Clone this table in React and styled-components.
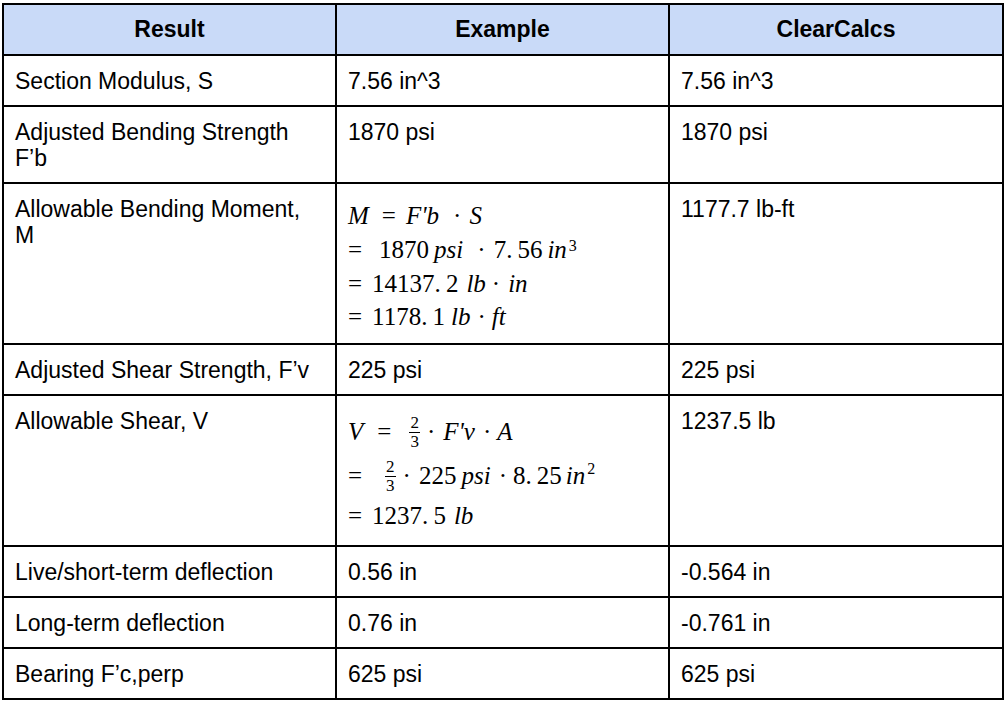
import React from "react"
import styled, { createGlobalStyle } from "styled-components"

const GlobalStyle = createGlobalStyle`
  html, body {
    margin: 0;
    padding: 0;
    background: #ffffff;
  }
  body {
    font-family: "Liberation Sans", Arial, sans-serif;
    color: #000000;
  }
`

// Outer table, Google Docs style with thick black rules
const Table = styled.table`
  margin: 3px 0 0 2px;
  width: 1000px;
  border-collapse: collapse;
  table-layout: fixed;
  font-size: 23px;
  line-height: 26px;
`

const Col = styled.col`
  width: ${({ $w }) => $w}px;
`

const HeadCell = styled.th`
  background: #c9daf8;
  border: 2px solid #000;
  padding: 11px 11px 12px;
  font-weight: 700;
  text-align: center;
`

const Cell = styled.td`
  border: 2px solid #000;
  padding: 12px 11px 11px;
  vertical-align: top;
  text-align: left;
  font-weight: 400;
`

// Equation block, set in a serif to stand in for Cambria Math
const Equation = styled.div`
  font-family: "Liberation Serif", "DejaVu Serif", serif;
  font-size: 25px;
  margin-top: ${({ $mt }) => $mt || 0}px;
`

const EqLine = styled.div`
  display: flex;
  align-items: center;
  height: ${({ $h }) => $h}px;
  white-space: pre;
`

const Tok = styled.span`
  font-style: ${({ $i }) => ($i ? "italic" : "normal")};
  margin-left: ${({ $ml }) => $ml || 0}px;
`

const Sup = styled.span`
  font-style: normal;
  font-size: 16px;
  line-height: 16px;
  align-self: flex-start;
  margin-top: ${({ $top }) => $top || 0}px;
  margin-left: ${({ $ml }) => $ml || 2}px;
`

const Frac = styled.span`
  display: inline-flex;
  flex-direction: column;
  align-items: center;
  font-size: 17px;
  line-height: 18px;
  margin-left: ${({ $ml }) => $ml || 0}px;

  span + span {
    border-top: 1px solid #000;
    padding: 0 1px;
  }
`

const Half = ({ ml }) => (
  <Frac $ml={ml}>
    <span>2</span>
    <span>3</span>
  </Frac>
)

const MomentEq = () => (
  <Equation $mt={3}>
    <EqLine $h={34}>
      <Tok $i>M</Tok>
      <Tok $ml={13}>=</Tok>
      <Tok $i $ml={10}>F'b</Tok>
      <Tok $ml={14}>·</Tok>
      <Tok $i $ml={8}>S</Tok>
    </EqLine>
    <EqLine $h={34}>
      <Tok>=</Tok>
      <Tok $ml={17}>1870</Tok>
      <Tok $i $ml={5}>psi</Tok>
      <Tok $ml={14}>·</Tok>
      <Tok $ml={8}>7.{"\u2009"}56</Tok>
      <Tok $i $ml={5}>in</Tok>
      <Sup $top={5}>3</Sup>
    </EqLine>
    <EqLine $h={34}>
      <Tok>=</Tok>
      <Tok $ml={10}>14137.{"\u2009"}2</Tok>
      <Tok $i $ml={8}>lb</Tok>
      <Tok $ml={6}>·</Tok>
      <Tok $i $ml={8}>in</Tok>
    </EqLine>
    <EqLine $h={31}>
      <Tok>=</Tok>
      <Tok $ml={10}>1178.{"\u2009"}1</Tok>
      <Tok $i $ml={6}>lb</Tok>
      <Tok $ml={7}>·</Tok>
      <Tok $i $ml={6}>ft</Tok>
    </EqLine>
  </Equation>
)

const ShearEq = () => (
  <Equation $mt={1}>
    <EqLine $h={46}>
      <Tok $i>V</Tok>
      <Tok $ml={14}>=</Tok>
      <Half ml={18} />
      <Tok $ml={7}>·</Tok>
      <Tok $i $ml={8}>F'v</Tok>
      <Tok $ml={8}>·</Tok>
      <Tok $i $ml={6}>A</Tok>
    </EqLine>
    <EqLine $h={42}>
      <Tok>=</Tok>
      <Half ml={23} />
      <Tok $ml={7}>·</Tok>
      <Tok $ml={8}>225</Tok>
      <Tok $i $ml={5}>psi</Tok>
      <Tok $ml={8}>·</Tok>
      <Tok $ml={6}>8.{"\u2009"}25</Tok>
      <Tok $i $ml={4}>in</Tok>
      <Sup $top={6}>2</Sup>
    </EqLine>
    <EqLine $h={37}>
      <Tok>=</Tok>
      <Tok $ml={10}>1237.{"\u2009"}5</Tok>
      <Tok $i $ml={8}>lb</Tok>
    </EqLine>
  </Equation>
)

const rows = [
  { label: "Section Modulus, S", example: "7.56 in^3", calc: "7.56 in^3" },
  { label: "Adjusted Bending Strength F’b", example: "1870 psi", calc: "1870 psi" },
  { label: "Allowable Bending Moment, M", example: <MomentEq />, calc: "1177.7 lb-ft" },
  { label: "Adjusted Shear Strength, F’v", example: "225 psi", calc: "225 psi" },
  { label: "Allowable Shear, V", example: <ShearEq />, calc: "1237.5 lb" },
  { label: "Live/short-term deflection", example: "0.56 in", calc: "-0.564 in" },
  { label: "Long-term deflection", example: "0.76 in", calc: "-0.761 in" },
  { label: "Bearing F’c,perp", example: "625 psi", calc: "625 psi" },
]

const App = () => (
  <>
    <GlobalStyle />
    <Table>
      <colgroup>
        <Col $w={333} />
        <Col $w={333} />
        <Col $w={334} />
      </colgroup>
      <thead>
        <tr>
          <HeadCell>Result</HeadCell>
          <HeadCell>Example</HeadCell>
          <HeadCell>ClearCalcs</HeadCell>
        </tr>
      </thead>
      <tbody>
        {rows.map(({ label, example, calc }) => (
          <tr key={label}>
            <Cell>{label}</Cell>
            <Cell>{example}</Cell>
            <Cell>{calc}</Cell>
          </tr>
        ))}
      </tbody>
    </Table>
  </>
)

export default App
